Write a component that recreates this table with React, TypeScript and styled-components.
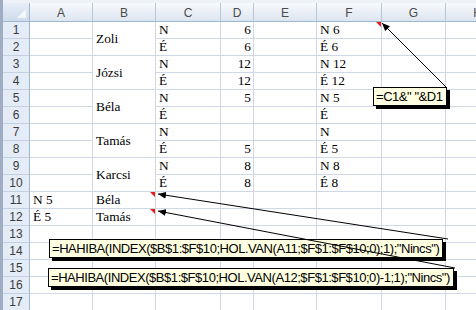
import React from "react";
import styled, { createGlobalStyle } from "styled-components";

const GlobalStyle = createGlobalStyle`
  html, body {
    margin: 0;
    padding: 0;
    width: 476px;
    height: 310px;
    overflow: hidden;
    background: #ffffff;
  }
`;

const COLS = ["A", "B", "C", "D", "E", "F", "G", "H"];
const WIDTHS = [27, 63, 63, 65, 33, 63, 65, 64, 64];

type CellData = { text?: string; span?: number; align?: "left" | "right"; note?: boolean };
type RowData = (CellData | null)[];

const n = (text: string): CellData => ({ text, align: "right" });
const t = (text: string, note = false): CellData => ({ text, note });
const e: CellData = {};

// null = covered by a merged cell above
const ROWS: RowData[] = [
  [e, { text: "Zoli", span: 2 }, t("N"), n("6"), e, t("N 6", true), e, e],
  [e, null, t("É"), n("6"), e, t("É 6"), e, e],
  [e, { text: "Józsi", span: 2 }, t("N"), n("12"), e, t("N 12"), e, e],
  [e, null, t("É"), n("12"), e, t("É 12"), e, e],
  [e, { text: "Béla", span: 2 }, t("N"), n("5"), e, t("N 5"), e, e],
  [e, null, t("É"), e, e, t("É"), e, e],
  [e, { text: "Tamás", span: 2 }, t("N"), e, e, t("N"), e, e],
  [e, null, t("É"), n("5"), e, t("É 5"), e, e],
  [e, { text: "Karcsi", span: 2 }, t("N"), n("8"), e, t("N 8"), e, e],
  [e, null, t("É"), n("8"), e, t("É 8"), e, e],
  [t("N 5"), t("Béla", true), e, e, e, e, e, e],
  [t("É 5"), t("Tamás", true), e, e, e, e, e, e],
  [e, e, e, e, e, e, e, e],
  [e, e, e, e, e, e, e, e],
  [e, e, e, e, e, e, e, e],
  [e, e, e, e, e, e, e, e],
  [e, e, e, e, e, e, e, e],
];

const Window = styled.div`
  position: relative;
  width: 476px;
  height: 310px;
  overflow: hidden;
  box-sizing: border-box;
  padding-top: 3px;
  background: linear-gradient(#eef1f5, #dfe4ea);
  border-left: 3px solid #9fadc2;
`;

const Sheet = styled.div`
  display: grid;
  grid-template-columns: ${WIDTHS.map((w) => `${w}px`).join(" ")};
  grid-template-rows: 19px repeat(17, 17px);
  background: #ffffff;
`;

const Corner = styled.div`
  position: relative;
  box-sizing: border-box;
  background: linear-gradient(#e6edf7, #cfdbeb);
  border-right: 1px solid #9eb6ce;
  border-bottom: 1px solid #9eb6ce;

  &::after {
    content: "";
    position: absolute;
    right: 3px;
    bottom: 3px;
    border-style: solid;
    border-width: 0 0 9px 9px;
    border-color: transparent transparent #f4f7fb transparent;
  }
`;

const ColHead = styled.div`
  box-sizing: border-box;
  display: flex;
  align-items: center;
  justify-content: center;
  background: linear-gradient(#f8fafd, #dde5f0);
  border-right: 1px solid #b7c7da;
  border-bottom: 1px solid #9eb6ce;
  font-family: "Liberation Sans", Arial, sans-serif;
  font-size: 12px;
  color: #4b4b4b;
  padding-top: 1px;
`;

const RowHead = styled.div`
  box-sizing: border-box;
  display: flex;
  align-items: center;
  justify-content: center;
  background: #e4ecf7;
  border-right: 1px solid #9eb6ce;
  border-bottom: 1px solid #c2d0e2;
  font-family: "Liberation Sans", Arial, sans-serif;
  font-size: 12px;
  color: #3c3c3c;
`;

const Cell = styled.div<{ $span: number; $align: "left" | "right"; $note: boolean }>`
  position: relative;
  box-sizing: border-box;
  grid-row: span ${(p) => p.$span};
  display: flex;
  align-items: ${(p) => (p.$span > 1 ? "center" : "flex-end")};
  justify-content: ${(p) => (p.$align === "right" ? "flex-end" : "flex-start")};
  padding: 0 2px 0 3px;
  border-right: 1px solid #d0d7e5;
  border-bottom: 1px solid #d0d7e5;
  font-family: "Liberation Serif", "Times New Roman", serif;
  font-size: 13.33px;
  line-height: 16px;
  color: #000000;
  white-space: nowrap;
  overflow: hidden;

  &::after {
    content: "";
    display: ${(p) => (p.$note ? "block" : "none")};
    position: absolute;
    top: 0;
    right: 0;
    border-style: solid;
    border-width: 0 5px 5px 0;
    border-color: transparent #e21b1b transparent transparent;
  }
`;

const Callout = styled.div<{ $x: number; $y: number }>`
  position: absolute;
  left: ${(p) => p.$x}px;
  top: ${(p) => p.$y}px;
  box-sizing: border-box;
  height: 19px;
  padding: 0 3px 0 2px;
  display: flex;
  align-items: center;
  background: #ffffe1;
  border: 1px solid #000000;
  box-shadow: 3px 3px 0 #000000;
  font-family: "Liberation Sans", Arial, sans-serif;
  font-size: 13px;
  letter-spacing: -0.45px;
  color: #000000;
  white-space: nowrap;
`;

const Arrows = styled.svg`
  position: absolute;
  left: 0;
  top: 0;
  pointer-events: none;
`;

// coordinates measured from the left edge of the window frame
const ARROWS = [
  { x1: 447, y1: 88, x2: 382, y2: 23 },
  { x1: 448, y1: 239, x2: 158, y2: 194 },
  { x1: 455, y1: 268, x2: 158, y2: 211 },
];

export default function App() {
  return (
    <>
      <GlobalStyle />
      <Window>
        <Sheet>
          <Corner />
          {COLS.map((c) => (
            <ColHead key={c}>{c}</ColHead>
          ))}
          {ROWS.map((row, r) => (
            <React.Fragment key={r}>
              <RowHead>{r + 1}</RowHead>
              {row.map((cell, c) =>
                cell === null ? null : (
                  <Cell
                    key={c}
                    $span={cell.span ?? 1}
                    $align={cell.align ?? "left"}
                    $note={!!cell.note}
                  >
                    {cell.text}
                  </Cell>
                )
              )}
            </React.Fragment>
          ))}
        </Sheet>

        <Callout $x={370} $y={87}>=C1&amp;" "&amp;D1</Callout>
        <Callout $x={46} $y={239}>
          =HAHIBA(INDEX($B$1:$F$10;HOL.VAN(A11;$F$1:$F$10;0);1);"Nincs")
        </Callout>
        <Callout $x={45} $y={268}>
          =HAHIBA(INDEX($B$1:$F$10;HOL.VAN(A12;$F$1:$F$10;0)-1;1);"Nincs")
        </Callout>

        <Arrows width={476} height={310} viewBox="0 0 476 310">
          <defs>
            <marker
              id="head"
              markerUnits="userSpaceOnUse"
              markerWidth="9"
              markerHeight="8"
              refX="8"
              refY="4"
              orient="auto"
            >
              <path d="M0,0.5 L8,4 L0,7.5 Z" fill="#000" />
            </marker>
          </defs>
          {ARROWS.map((a, i) => (
            <line
              key={i}
              x1={a.x1 - 3}
              y1={a.y1}
              x2={a.x2 - 3}
              y2={a.y2}
              stroke="#000"
              strokeWidth={1}
              markerEnd="url(#head)"
            />
          ))}
        </Arrows>
      </Window>
    </>
  );
}
